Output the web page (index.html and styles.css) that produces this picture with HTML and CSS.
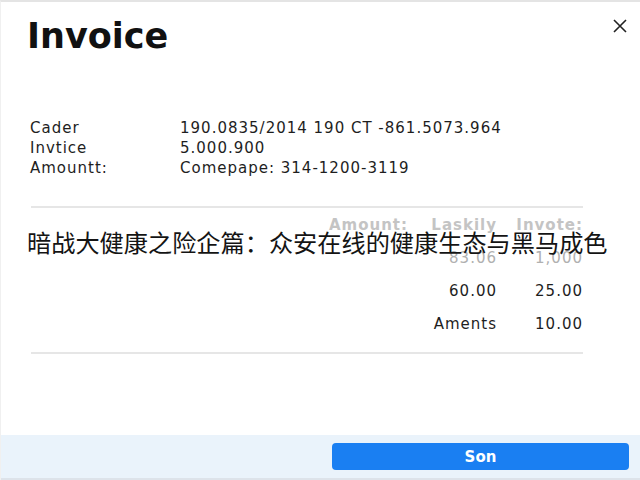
FILE: index.html
```html
<!DOCTYPE html>
<html lang="en">
<head>
    <meta charset="UTF-8">
    <meta name="viewport" content="width=device-width, initial-scale=1.0">
    <title>Invoice</title>
    <link rel="stylesheet" href="styles.css">
</head>
<body>

    <div class="dialog">
        <!-- Header -->
        <div class="head">
            <h1 class="title">Invoice</h1>
            <button class="close" aria-label="Close">
                <svg width="14" height="14" viewBox="0 0 14 14">
                    <path d="M1 1L13 13M13 1L1 13" stroke="#222" stroke-width="1.6" fill="none"/>
                </svg>
            </button>
        </div>

        <!-- Invoice details -->
        <div class="details">
            <span>Cader</span><span>190.0835/2014 190 CT -861.5073.964</span>
            <span>Invtice</span><span>5.000.900</span>
            <span>Amountt:</span><span>Comepape: 314-1200-3119</span>
        </div>

        <hr class="divider divider-top">

        <!-- Totals table -->
        <div class="totals">
            <span class="th">Amount:</span><span class="th">Laskily</span><span class="th">Invote:</span>
            <span></span><span class="muted">83.06</span><span class="muted">1,000</span>
            <span></span><span>60.00</span><span>25.00</span>
            <span></span><span>Aments</span><span>10.00</span>
        </div>

        <hr class="divider divider-bottom">

        <p class="caption">暗战大健康之险企篇：众安在线的健康生态与黑马成色</p>

        <!-- Footer -->
        <div class="foot">
            <button class="primary">Son</button>
        </div>
    </div>

</body>
</html>
```

FILE: styles.css
```css
/* Global Styles */
* {
    margin: 0;
    padding: 0;
    box-sizing: border-box;
}

body {
    font-family: 'DejaVu Sans', 'Liberation Sans', sans-serif;
    background: #ffffff;
    color: #1c1c1c;
    width: 640px;
    height: 480px;
    overflow: hidden;
}

.dialog {
    position: relative;
    height: 480px;
    display: flex;
    flex-direction: column;
    border-top: 2px solid #e4e4e4;
    border-left: 1px solid #f0f0f0;
}

.head {
    display: flex;
    justify-content: space-between;
    align-items: flex-start;
    padding: 14px 13px 0 26px;
}

.title {
    font-size: 35px;
    line-height: 40px;
    font-weight: 700;
    color: #111;
}

.close {
    border: none;
    background: none;
    width: 14px;
    height: 14px;
    margin-top: 3px;
    cursor: pointer;
}

.details {
    display: grid;
    grid-template-columns: 150px auto;
    margin-top: 62px;
    padding-left: 29px;
    font-size: 15px;
    line-height: 20px;
    letter-spacing: 1px;
    color: #1e1e1e;
}

.divider {
    border: none;
    height: 2px;
    background: #e6e6e6;
    margin: 0 57px 0 30px;
}

.divider-top {
    margin-top: 28px;
}

.divider-bottom {
    margin-top: 11px;
}

.totals {
    display: grid;
    grid-template-columns: 1fr 89px 86px;
    margin: 1px 57px 0 30px;
    font-size: 15px;
    line-height: 33px;
    letter-spacing: 1px;
    text-align: right;
    color: #1e1e1e;
}

.totals .th {
    font-weight: 700;
    color: #c4c4c4;
}

.totals .muted {
    color: #b0b0b0;
}

/* headline strip laid over the table */
.caption {
    position: absolute;
    left: 26px;
    top: 228px;
    font-family: 'Noto Sans CJK SC', sans-serif;
    font-size: 24.2px;
    line-height: 1;
    color: #141414;
    white-space: nowrap;
}

.foot {
    margin-top: auto;
    height: 45px;
    display: flex;
    justify-content: flex-end;
    padding: 8px 11px 0;
    background: #eaf3fb;
    border-bottom: 2px solid #dde3ea;
}

.primary {
    width: 297px;
    height: 27px;
    border: none;
    border-radius: 4px;
    background: #1a7ff2;
    color: white;
    font-family: 'DejaVu Sans', sans-serif;
    font-size: 15px;
    font-weight: 700;
    cursor: pointer;
}
```
